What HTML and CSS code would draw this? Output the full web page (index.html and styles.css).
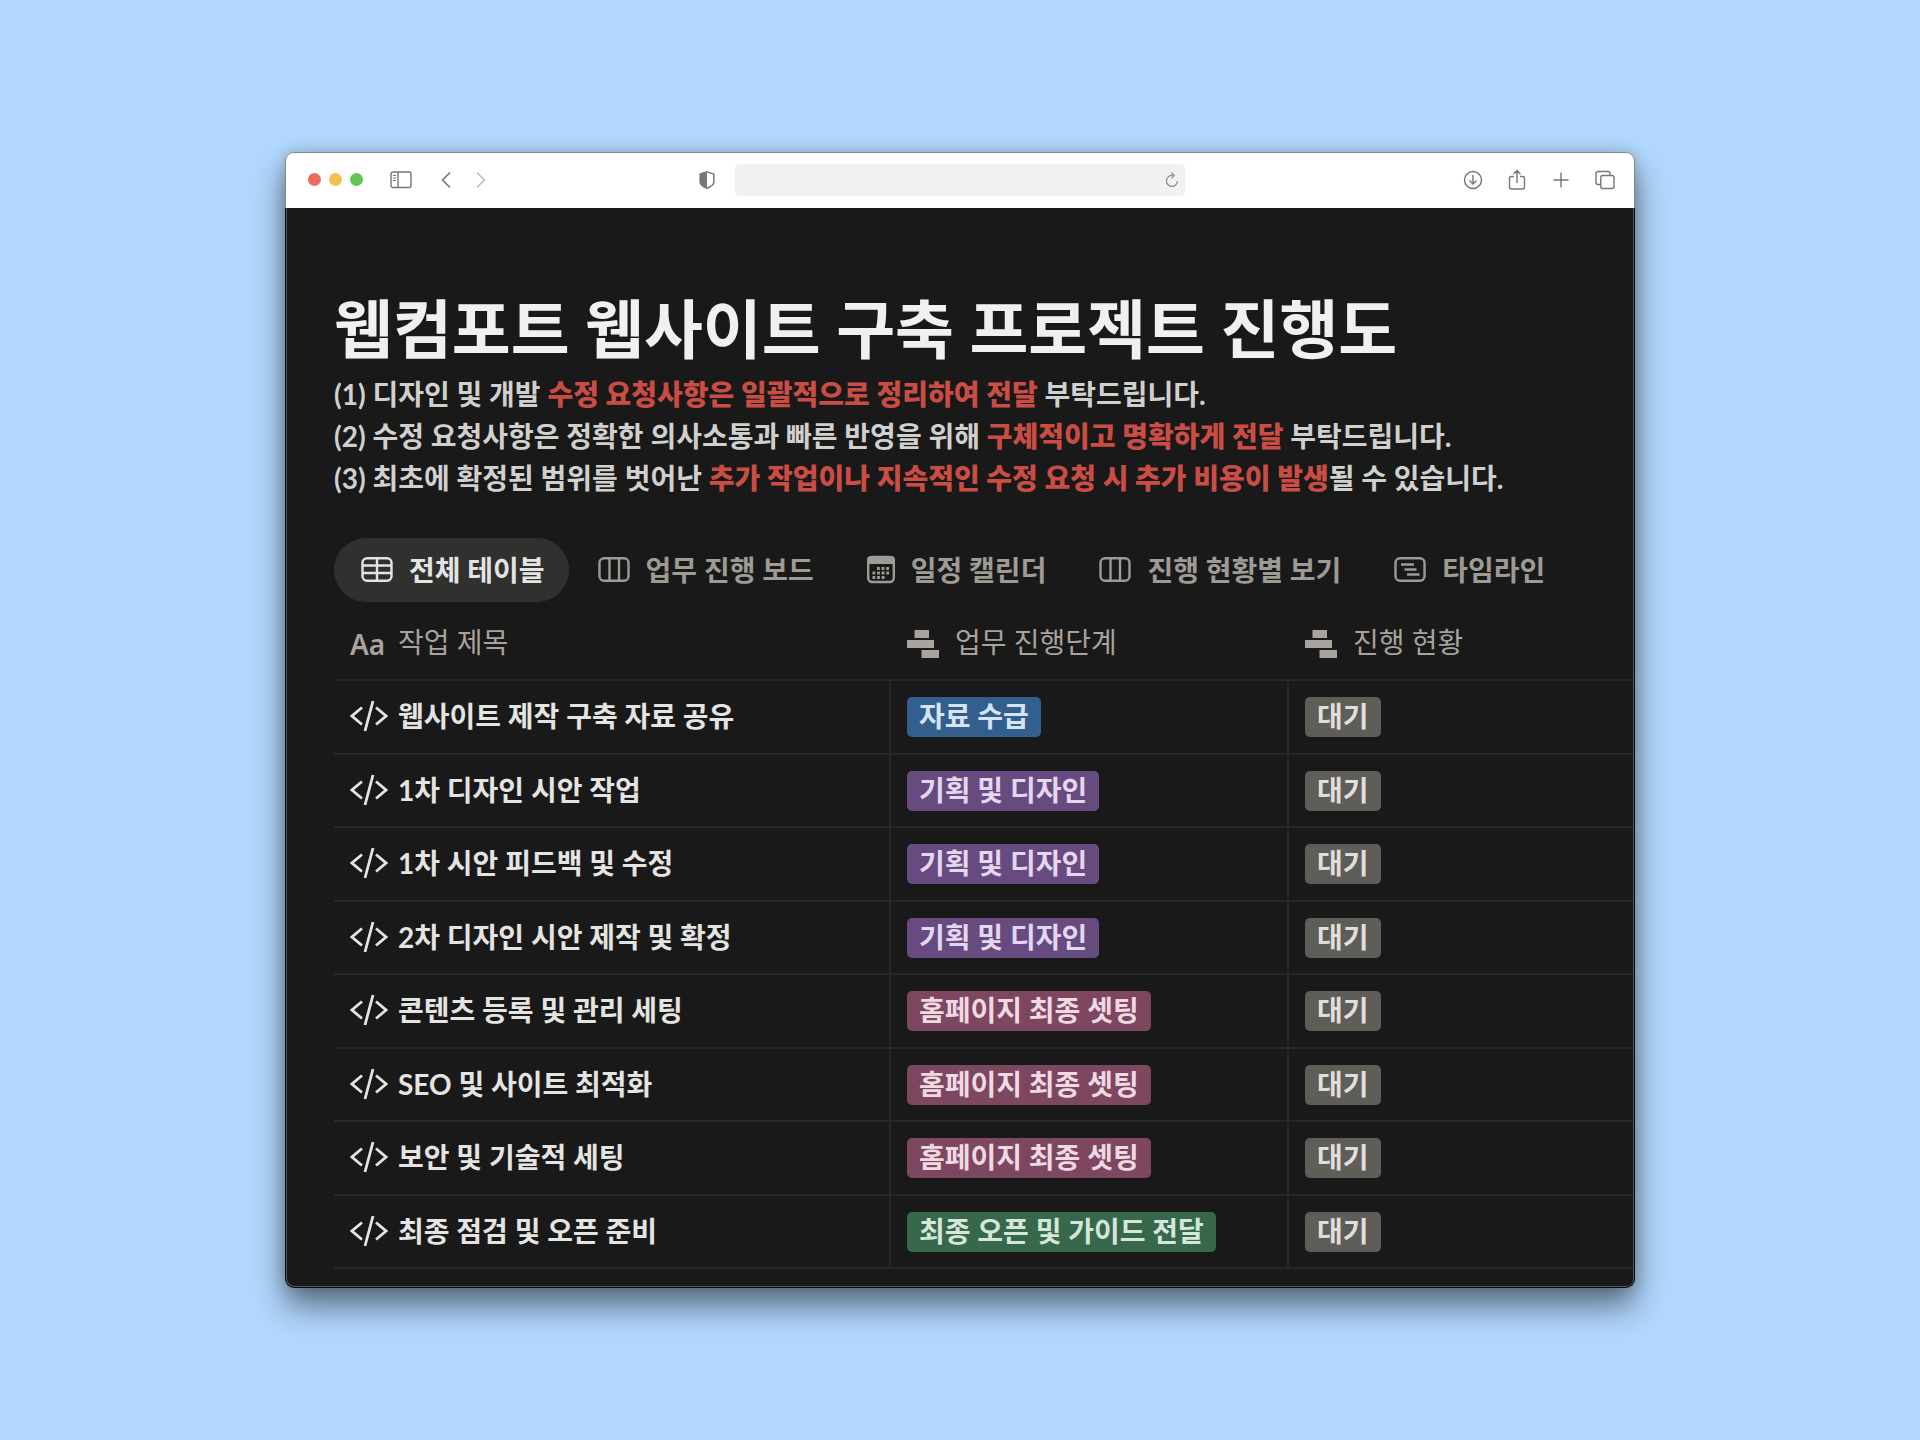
FILE: index.html
```html
<!DOCTYPE html>
<html lang="ko">
<head>
<meta charset="utf-8">
<meta name="viewport" content="width=device-width, initial-scale=1">
<title>웹컴포트 웹사이트 구축 프로젝트 진행도</title>
<link rel="stylesheet" href="styles.css">
</head>
<body>
<svg class="sprite" aria-hidden="true">
  <symbol id="i-code" viewBox="0 0 38 32"><path d="M12 7.500 2 16l10 8.500M26 7.500 36 16l-10 8.500M23 1l-8 30" fill="none" stroke="currentColor" stroke-width="2.800"/></symbol>
  <symbol id="i-status" viewBox="0 0 32 28"><path d="M7.500 0H22v8H7.500zM0 10h27v8H0zM14.500 20H32v8H14.500z" fill="currentColor"/></symbol>
  <symbol id="i-board" viewBox="0 0 32 32"><g fill="none" stroke="currentColor" stroke-width="2.400"><rect x="1.500" y="5.200" width="29" height="22.600" rx="4.500"/><path d="M11.500 5v23M21 5v23"/></g></symbol>
</svg>
<main class="window">
  <header class="toolbar">
    <div class="toolbar-side">
      <div class="lights"><span class="light red"></span><span class="light yellow"></span><span class="light green"></span></div>
      <button class="tool sidebar" aria-label="사이드바"><svg width="22" height="18" viewBox="0 0 22 18" fill="none" stroke="currentColor" stroke-width="1.400"><rect x="1" y="1" width="20" height="15.500" rx="2"/><path d="M8 1v15.500"/><path d="M3 4.500h3M3 7h3M3 9.500h3" stroke-width="1"/></svg></button>
      <button class="tool back" aria-label="뒤로"><svg width="10" height="18" viewBox="0 0 10 18" fill="none" stroke="currentColor" stroke-width="1.600"><path d="M9 1.500 1.500 9 9 16.500"/></svg></button>
      <button class="tool forward" aria-label="앞으로"><svg width="10" height="18" viewBox="0 0 10 18" fill="none" stroke="currentColor" stroke-width="1.600"><path d="M1 1.500 8.500 9 1 16.500"/></svg></button>
      <button class="tool shield" aria-label="개인정보 보호"><svg width="16" height="18" viewBox="0 0 16 18"><path d="M8 .900 14.800 3v8c0 2.500-3 4.700-6.800 6.200C4.200 15.700 1.200 13.500 1.200 11V3z" fill="none" stroke="currentColor" stroke-width="1.500"/><path d="M8 1v16C4.200 15.500 1 13.500 1 11V3z" fill="currentColor"/></svg></button>
    </div>
    <div class="address">
      <input class="url" type="text" aria-label="주소">
      <button class="tool reload" aria-label="새로 고침"><svg width="14" height="16" viewBox="0 0 14 16" fill="none" stroke="currentColor" stroke-width="1.200"><path d="M7.800 3.500A5.500 5.500 0 1 0 12.500 9M6.500.800 9.300 3.500 6.500 6.200"/></svg></button>
    </div>
    <div class="toolbar-side actions">
      <button class="tool" aria-label="다운로드"><svg width="20" height="22" viewBox="0 0 20 22" fill="none" stroke="currentColor" stroke-width="1.400"><circle cx="10" cy="11" r="8.500"/><path d="M10 6v9M6.500 11.500l3.500 3.500 3.500-3.500"/></svg></button>
      <button class="tool" aria-label="공유"><svg width="20" height="22" viewBox="0 0 20 22" fill="none" stroke="currentColor" stroke-width="1.400"><path d="M7 7.500H4.500a2 2 0 0 0-2 2V18a2 2 0 0 0 2 2h11a2 2 0 0 0 2-2V9.500a2 2 0 0 0-2-2H13M10 14V1.500M6.500 5 10 1.500 13.500 5"/></svg></button>
      <button class="tool" aria-label="새 탭"><svg width="20" height="22" viewBox="0 0 20 22" fill="none" stroke="currentColor" stroke-width="1.400"><path d="M10 3.500v15M2.500 11h15"/></svg></button>
      <button class="tool" aria-label="탭 개요"><svg width="20" height="22" viewBox="0 0 20 22" fill="none" stroke="currentColor" stroke-width="1.400"><rect x="5.800" y="6.500" width="13.200" height="13" rx="2"/><path d="M5.800 15.500H3a2 2 0 0 1-2-2v-9a2 2 0 0 1 2-2h10a2 2 0 0 1 2 2v2"/></svg></button>
    </div>
  </header>

  <div class="page">
    <h1 class="title">웹컴포트 웹사이트 구축 프로젝트 진행도</h1>
    <div class="notes">
      <p>(1) 디자인 및 개발 <strong>수정 요청사항은 일괄적으로 정리하여 전달</strong> 부탁드립니다.</p>
      <p>(2) 수정 요청사항은 정확한 의사소통과 빠른 반영을 위해 <strong>구체적이고 명확하게 전달</strong> 부탁드립니다.</p>
      <p>(3) 최초에 확정된 범위를 벗어난 <strong>추가 작업이나 지속적인 수정 요청 시 추가 비용이 발생</strong>될 수 있습니다.</p>
    </div>

    <nav class="tabs">
      <button class="tab active"><svg viewBox="0 0 32 32" fill="none" stroke="currentColor" stroke-width="2.400"><rect x="1.500" y="5.200" width="29" height="22.600" rx="4.500"/><path d="M16 5v23M1 12.500h30M1 20h30"/></svg>전체 테이블</button>
      <button class="tab"><svg><use href="#i-board"/></svg>업무 진행 보드</button>
      <button class="tab"><svg class="calendar" viewBox="0 0 28 32"><rect x="1.200" y="4" width="25.600" height="25" rx="4" fill="none" stroke="currentColor" stroke-width="2.400"/><path d="M0 11V7q0-4 4-4h20q4 0 4 4v4z" fill="currentColor"/><path d="M10 15.500h13M5.500 20h18M5.500 24.500h13" stroke="currentColor" stroke-width="2.800" stroke-dasharray="2.800 1.800" fill="none"/></svg>일정 캘린더</button>
      <button class="tab"><svg><use href="#i-board"/></svg>진행 현황별 보기</button>
      <button class="tab"><svg viewBox="0 0 32 32" fill="none" stroke="currentColor" stroke-width="2.400"><rect x="1.500" y="5.200" width="29" height="22.600" rx="4.500"/><path d="M7 11.500h13M10.500 16.500h12M13 21.500h12.500"/></svg>타임라인</button>
    </nav>

    <table class="tasks">
      <colgroup><col class="col-name"><col class="col-stage"><col></colgroup>
      <thead>
        <tr>
          <th scope="col"><span class="cell name"><span class="aa" aria-hidden="true">Aa</span>작업 제목</span></th>
          <th scope="col"><span class="cell"><svg class="status"><use href="#i-status"/></svg>업무 진행단계</span></th>
          <th scope="col"><span class="cell"><svg class="status"><use href="#i-status"/></svg>진행 현황</span></th>
        </tr>
      </thead>
      <tbody>
        <tr><td><span class="cell name"><svg class="code"><use href="#i-code"/></svg>웹사이트 제작 구축 자료 공유</span></td><td><span class="tag blue">자료 수급</span></td><td><span class="tag gray">대기</span></td></tr>
        <tr><td><span class="cell name"><svg class="code"><use href="#i-code"/></svg>1차 디자인 시안 작업</span></td><td><span class="tag purple">기획 및 디자인</span></td><td><span class="tag gray">대기</span></td></tr>
        <tr><td><span class="cell name"><svg class="code"><use href="#i-code"/></svg>1차 시안 피드백 및 수정</span></td><td><span class="tag purple">기획 및 디자인</span></td><td><span class="tag gray">대기</span></td></tr>
        <tr><td><span class="cell name"><svg class="code"><use href="#i-code"/></svg>2차 디자인 시안 제작 및 확정</span></td><td><span class="tag purple">기획 및 디자인</span></td><td><span class="tag gray">대기</span></td></tr>
        <tr><td><span class="cell name"><svg class="code"><use href="#i-code"/></svg>콘텐츠 등록 및 관리 세팅</span></td><td><span class="tag pink">홈페이지 최종 셋팅</span></td><td><span class="tag gray">대기</span></td></tr>
        <tr><td><span class="cell name"><svg class="code"><use href="#i-code"/></svg>SEO 및 사이트 최적화</span></td><td><span class="tag pink">홈페이지 최종 셋팅</span></td><td><span class="tag gray">대기</span></td></tr>
        <tr><td><span class="cell name"><svg class="code"><use href="#i-code"/></svg>보안 및 기술적 세팅</span></td><td><span class="tag pink">홈페이지 최종 셋팅</span></td><td><span class="tag gray">대기</span></td></tr>
        <tr><td><span class="cell name"><svg class="code"><use href="#i-code"/></svg>최종 점검 및 오픈 준비</span></td><td><span class="tag green">최종 오픈 및 가이드 전달</span></td><td><span class="tag gray">대기</span></td></tr>
      </tbody>
    </table>
  </div>
</main>
</body>
</html>
```
FILE: styles.css
```css
* { box-sizing: border-box; }

body {
  margin: 0;
  min-height: 100vh;
  padding: 152px 285px;
  background: #b2d8fe;
  font-family: Lato, "Noto Sans CJK KR", sans-serif;
  font-size: 28px;
  font-weight: 700;
}

button { font: inherit; border: 0; background: none; padding: 0; color: inherit; }

.sprite { position: absolute; width: 0; height: 0; }

.window {
  border-radius: 9px;
  box-shadow: 0 18px 32px rgba(0, 0, 0, .5), 0 0 14px rgba(0, 0, 0, .16);
}

/* Browser toolbar */
.toolbar {
  display: grid;
  grid-template-columns: 1fr 450px 1fr;
  align-items: center;
  height: 56px;
  padding: 0 19px 2px;
  background: #fff;
  border: 1px solid #888;
  border-bottom: 0;
  border-radius: 9px 9px 0 0;
  color: #767676;
}
.toolbar-side { display: flex; align-items: center; }
.actions { justify-content: flex-end; gap: 24px; }
.lights { display: flex; gap: 8px; margin-left: 3px; }
.light { width: 13px; height: 13px; border-radius: 50%; }
.light.red { background: #ed6a5e; }
.light.yellow { background: #f5bf4f; }
.light.green { background: #61c554; }
.tool { display: flex; }
.sidebar { margin-left: 27px; }
.back { margin-left: 29px; }
.forward { margin-left: 25px; color: #bdbdbd; }
.shield { margin-left: auto; margin-right: 20px; }
.address {
  display: flex;
  align-items: center;
  height: 32px;
  padding: 0 6px 0 8px;
  background: #f1f1f1;
  border-radius: 5px;
}
.url { flex: 1; min-width: 0; border: 0; background: none; font-size: 14px; outline: 0; }
.reload { color: #8a8a8a; }

/* Page body */
.page {
  padding: 81px 1px 18px 48px;
  background: #191919;
  border: 1px solid #0c0c0c;
  border-top: 0;
  border-radius: 0 0 9px 9px;
  box-shadow: inset 1px -1px #555, inset -1px 0 #555;
  color: #d0d0cf;
}
.title {
  margin: 0 0 4px;
  font-size: 64px;
  line-height: 80px;
  color: #f1f0ee;
}
.notes p { margin: 0; line-height: 42px; }
.notes strong { color: #ca4d44; }

.tabs { display: flex; gap: 2px; margin-top: 39px; }
.tab {
  display: flex;
  align-items: center;
  gap: 16px;
  height: 64px;
  padding: 0 24px 2px 27px;
  border-radius: 32px;
  color: #9e9a94;
  white-space: nowrap;
}
.tab svg { width: 32px; height: 32px; }
.tab .calendar { width: 28px; }
.tab.active { background: #30302e; color: #e4e4e2; }

.tasks {
  width: 100%;
  table-layout: fixed;
  border-collapse: separate;
  border-spacing: 0;
}
.col-name { width: 557px; }
.col-stage { width: 398px; }
.tasks th, .tasks td {
  padding: 0 16px;
  border-bottom: 2px solid #272727;
  text-align: left;
  vertical-align: middle;
  line-height: 40px;
}
.tasks th { height: 79px; padding-top: 2px; font-weight: 400; color: #a8a39c; }
.tasks td { height: 74px; border-right: 2px solid #272727; }
.tasks tr:nth-child(even) td { height: 73px; }
.tasks td:last-child { border-right: 0; }
.tasks td:first-child { padding-bottom: 2px; color: #e4e4e2; }
.cell { display: flex; align-items: center; gap: 16px; }
.name { gap: 10px; }
.code { width: 38px; height: 32px; }
.status { width: 32px; height: 28px; margin-top: 4px; }
.aa { width: 38px; padding-top: 4px; font-family: "Noto Sans", sans-serif; font-weight: 600; }

.tag {
  display: block;
  width: max-content;
  height: 40px;
  padding: 0 12px;
  border-radius: 5px;
  line-height: 38px;
}
.blue { background: #335f8e; color: #d5e3f3; }
.purple { background: #674b80; color: #e3d8ee; }
.pink { background: #7d4760; color: #f0d9e3; }
.green { background: #37684c; color: #d5e6dc; }
.gray { background: #5f5d58; color: #e0dfdc; }
```
